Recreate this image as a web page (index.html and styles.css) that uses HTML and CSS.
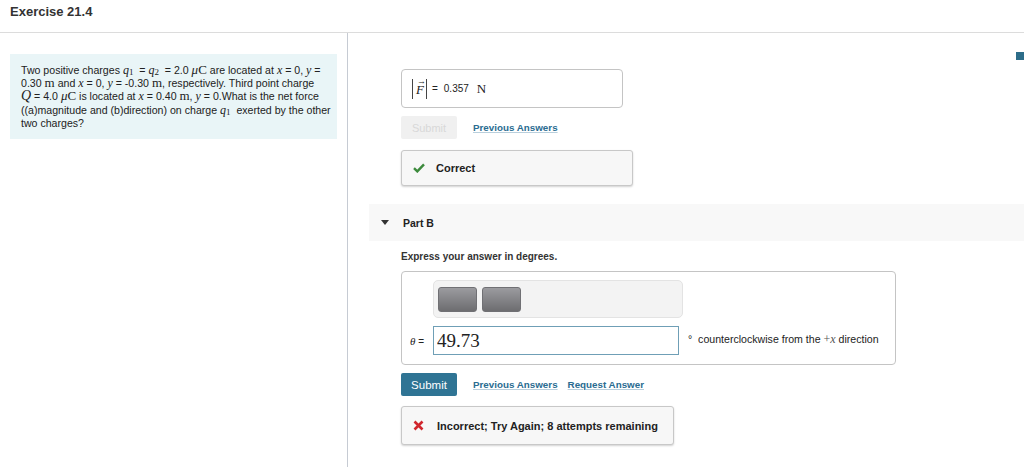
FILE: index.html
```html
<!DOCTYPE html>
<html lang="en">
<head>
    <meta charset="UTF-8">
    <title>Exercise 21.4</title>
    <link rel="stylesheet" href="styles.css">
</head>
<body>
    <header class="page-title">Exercise 21.4</header>

    <div class="layout">
        <aside class="problem-col">
            <div class="problem">
                Two positive charges <i class="m">q</i><sub class="ms">1</sub>&nbsp; = <i class="m">q</i><sub class="ms">2</sub>&nbsp; = 2.0 <span class="mr"><i>μ</i>C</span> are located at <i class="m">x</i> = 0, <i class="m">y</i> = 0.30 <span class="mr">m</span> and <i class="m">x</i> = 0, <i class="m">y</i> = -0.30 <span class="mr">m</span>, respectively. Third point charge <i class="m big">Q</i>&nbsp;= 4.0 <span class="mr"><i>μ</i>C</span> is located at <i class="m">x</i> = 0.40 <span class="mr">m</span>, <i class="m">y</i> = 0.What is the net force ((a)magnitude and (b)direction) on charge <i class="m">q</i><sub class="ms">1</sub>&nbsp; exerted by the other two charges?
            </div>
        </aside>

        <main class="work-col">
            <section class="part part-a">
                <div class="answer-box">
                    <span class="abs"><span class="vec"><i>F</i><span class="arrow">&#8594;</span></span></span>
                    <span class="eq">=</span>
                    <span class="val">0.357</span>
                    <span class="unit">N</span>
                </div>
                <div class="actions">
                    <button class="btn btn-disabled" disabled>Submit</button>
                    <a class="link" href="#">Previous Answers</a>
                </div>
                <div class="feedback">
                    <svg class="fb-icon" width="12" height="10" viewBox="0 0 12 10"><path d="M1 5.2 L4.3 8.4 L11 1.4" fill="none" stroke="#3c8a3c" stroke-width="2.4"/></svg>
                    <span>Correct</span>
                </div>
            </section>

            <div class="part-head">
                <span class="caret"></span>
                <span>Part B</span>
            </div>

            <section class="part part-b">
                <p class="instruction">Express your answer in degrees.</p>
                <div class="answer-area">
                    <div class="toolbar">
                        <span class="tool"></span>
                        <span class="tool"></span>
                    </div>
                    <div class="entry-row">
                        <label class="entry-label" for="theta"><i>θ</i> =</label>
                        <input class="entry" id="theta" type="text" value="49.73">
                        <span class="entry-unit">°&nbsp;&nbsp;counterclockwise from the <span class="plusx">+<i>x</i></span> direction</span>
                    </div>
                </div>
                <div class="actions">
                    <button class="btn btn-primary">Submit</button>
                    <a class="link" href="#">Previous Answers</a>
                    <a class="link" href="#">Request Answer</a>
                </div>
                <div class="feedback feedback-wide">
                    <svg class="fb-icon" width="11" height="11" viewBox="0 0 11 11"><path d="M1.5 1.5 L9.5 9.5 M9.5 1.5 L1.5 9.5" stroke="#d0262d" stroke-width="2.6"/></svg>
                    <span>Incorrect; Try Again; 8 attempts remaining</span>
                </div>
            </section>
        </main>
    </div>

    <span class="corner-mark"></span>
</body>
</html>
```

FILE: styles.css
```css
body {
    margin: 0;
    font-family: "Liberation Sans", Arial, sans-serif;
    color: #222;
    background: #fff;
    height: 467px;
    overflow: hidden;
    position: relative;
}

.page-title {
    height: 33px;
    box-sizing: border-box;
    padding: 4px 0 0 10px;
    font-size: 13px;
    font-weight: bold;
    color: #333;
    border-bottom: 1px solid #dcdcdc;
}

.layout {
    display: grid;
    grid-template-columns: 347px 1fr;
    height: 434px;
}

/* left column: problem statement */
.problem-col {
    padding: 21px 10px 0 10px;
}

.problem {
    background: #e9f5f7;
    padding: 10px 3px 9px 11px;
    font-size: 10.6px;
    line-height: 13.2px;
    color: #222;
}

.m {
    font-family: "Liberation Serif", "Times New Roman", serif;
    font-size: 12px;
    line-height: 0;
}

.m.big {
    font-size: 14px;
}

.ms {
    font-family: "Liberation Serif", serif;
    font-size: 9px;
    vertical-align: -1px;
    line-height: 0;
}

.mr {
    font-family: "Liberation Serif", serif;
    font-size: 13px;
    line-height: 0;
}

/* right column: answer parts */
.work-col {
    border-left: 1px solid #c6cbd3;
    padding-top: 36px;
}

.part {
    padding-left: 53px;
}

.answer-box {
    width: 222px;
    height: 39px;
    box-sizing: border-box;
    border: 1px solid #c4c4c4;
    border-radius: 4px;
    display: flex;
    align-items: center;
    padding-left: 10px;
    font-size: 10px;
}

.abs {
    border-left: 1px solid #444;
    border-right: 1px solid #444;
    padding: 3px 2px 1px 3px;
    font-family: "Liberation Serif", serif;
    font-size: 13px;
    line-height: 16px;
}

.vec {
    position: relative;
    display: inline-block;
}

.vec .arrow {
    position: absolute;
    left: 1px;
    top: -9px;
    font-size: 9px;
    font-style: normal;
}

.eq {
    margin: 0 6px 0 5px;
}

.unit {
    font-family: "Liberation Serif", serif;
    font-size: 13px;
    margin-left: 8px;
}

.actions {
    display: flex;
    align-items: center;
    gap: 10px;
    margin-top: 8px;
}

.actions .btn {
    margin-right: 6px;
}

.btn {
    width: 56px;
    height: 23px;
    border: none;
    border-radius: 2px;
    font-family: inherit;
    font-size: 11px;
    padding: 0;
}

.btn-disabled {
    background: #f0f0f0;
    color: #d8d8d8;
}

.btn-primary {
    background: #2f7494;
    color: #fff;
    font-size: 11.5px;
}

.link {
    font-size: 9.8px;
    font-weight: bold;
    color: #2a6c91;
    text-decoration: underline;
    text-decoration-color: #b9cfdc;
}

.feedback {
    width: 232px;
    height: 36px;
    box-sizing: border-box;
    margin-top: 11px;
    border: 1px solid #c8c8c8;
    border-radius: 3px;
    background: #f7f7f7;
    box-shadow: 0 1px 2px rgba(0, 0, 0, 0.18);
    display: flex;
    align-items: center;
    gap: 11px;
    padding-left: 11px;
    font-size: 11px;
    font-weight: bold;
    color: #222;
}

.feedback-wide {
    width: 273px;
    height: 39px;
    margin-top: 10px;
    gap: 13px;
}

.part-head {
    margin: 18px 0 0 21px;
    height: 37px;
    background: #f8f8f8;
    display: flex;
    align-items: center;
    padding-left: 12px;
    gap: 14px;
    font-size: 10.5px;
    font-weight: bold;
    color: #222;
}

.caret {
    width: 0;
    height: 0;
    border-left: 4px solid transparent;
    border-right: 4px solid transparent;
    border-top: 5px solid #333;
}

.instruction {
    margin: 10px 0 9px;
    font-size: 10px;
    font-weight: bold;
    color: #333;
}

.answer-area {
    width: 495px;
    height: 94px;
    box-sizing: border-box;
    border: 1px solid #c4c4c4;
    border-radius: 4px;
    padding: 8px 0 0 31px;
}

.toolbar {
    width: 250px;
    height: 38px;
    box-sizing: border-box;
    background: #f3f3f3;
    border: 1px solid #e3e3e3;
    border-radius: 5px;
    display: flex;
    align-items: center;
    gap: 5px;
    padding-left: 4px;
}

.tool {
    width: 39px;
    height: 25px;
    border-radius: 3px;
    background: linear-gradient(#9b9b9f, #6d6d70);
    border: 1px solid #707074;
    box-sizing: border-box;
}

.entry-row {
    display: flex;
    align-items: center;
    margin: 8px 0 0 -23px;
}

.entry-label {
    font-size: 10px;
    width: 23px;
    font-family: "Liberation Sans", sans-serif;
}

.entry-label i {
    font-family: "Liberation Serif", serif;
    font-size: 11px;
}

.entry {
    width: 246px;
    height: 29px;
    box-sizing: border-box;
    border: 1px solid #6f9fb6;
    border-radius: 0;
    padding: 0 0 0 3px;
    font-family: "Liberation Serif", serif;
    font-size: 19px;
    color: #222;
    outline: none;
}

.entry-unit {
    margin-left: 9px;
    font-size: 10.6px;
    color: #222;
    margin-top: -2px;
}

.plusx {
    font-family: "Liberation Serif", serif;
    font-size: 12px;
    color: #555;
}

.corner-mark {
    position: absolute;
    right: 0;
    top: 52px;
    width: 8px;
    height: 8px;
    background: #2d6d89;
}
```
